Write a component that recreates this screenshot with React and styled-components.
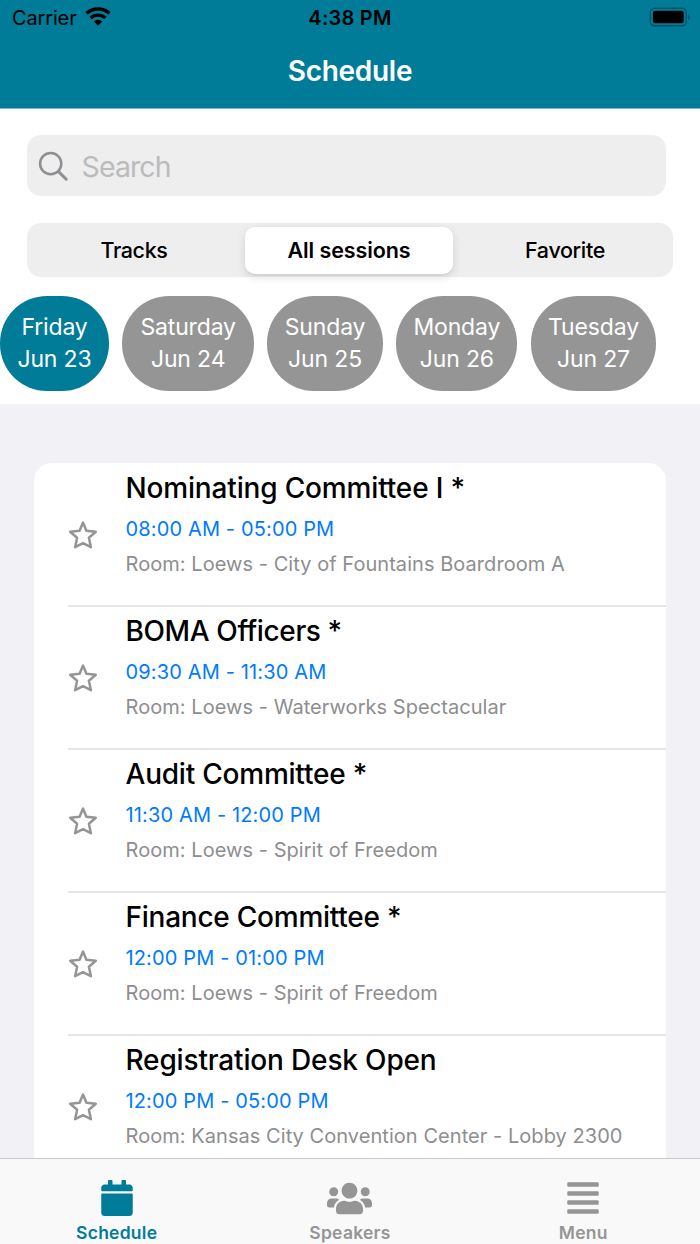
import React from 'react'
import styled, { createGlobalStyle } from 'styled-components'
import { FaCalendar, FaUsers, FaAlignJustify } from 'react-icons/fa'

const GlobalStyle = createGlobalStyle`
* {
  box-sizing: border-box;
}
body {
  margin: 0;
  font-family: Inter, "Liberation Sans", sans-serif;
  background-color: #f2f1f6;
}
`

const Screen = styled.div`
display: flex;
flex-direction: column;
width: 700px;
height: 1244px;
overflow: hidden;
background-color: #f2f1f6;
`

const Header = styled.header`
flex: none;
height: 109px;
background-color: #007c99;
border-bottom: 1px solid #7fb5c4;
`

const StatusBar = styled.div`
display: grid;
grid-template-columns: 1fr auto 1fr;
align-items: center;
height: 36px;
padding: 0 9px;
color: #000;
font-size: 20px;
line-height: 36px;
`

const Carrier = styled.div`
display: flex;
align-items: center;
gap: 8px;
padding-left: 3px;
letter-spacing: -0.15px;
`

const Wifi = styled.svg`
margin-bottom: 3px;
`

const Clock = styled.div`
font-weight: 600;
letter-spacing: 0.25px;
`

const Battery = styled.svg`
justify-self: end;
margin-bottom: 2px;
`

const HeaderTitle = styled.h1`
margin: 0;
color: white;
font-size: 28px;
font-weight: 600;
line-height: 70px;
text-align: center;
letter-spacing: -0.3px;
`

const Filters = styled.section`
flex: none;
height: 295px;
padding-top: 26px;
background-color: white;
`

const SearchBox = styled.div`
display: flex;
align-items: center;
gap: 12.5px;
width: 639px;
height: 61px;
margin-left: 27px;
padding: 2px 0 0 11px;
border-radius: 14px;
background-color: #eeeeee;
color: #bbbbbd;
font-size: 28.5px;
letter-spacing: -0.9px;
`

const Segments = styled.div`
display: grid;
grid-template-columns: 214px 208px 1fr;
gap: 4px;
width: 646px;
height: 54px;
margin: 27px 0 0 27px;
padding: 4px 0 3px;
border-radius: 14px;
background-color: #eeeeee;
`

const Segment = styled.div`
display: flex;
align-items: center;
justify-content: center;
padding-bottom: 1px;
border-radius: 10px;
color: #000;
font-size: 21.5px;
font-weight: ${props => props.$active ? 600 : 500};
letter-spacing: ${props => props.$active ? '-0.1px' : '-0.35px'};
background-color: ${props => props.$active ? 'white' : 'transparent'};
box-shadow: ${props => props.$active ? '0 3px 10px rgba(0, 0, 0, 0.12), 0 2px 1px rgba(0, 0, 0, 0.03)' : 'none'};
`

const Days = styled.div`
display: flex;
gap: 13.4px;
margin-top: 19px;
`

const Day = styled.div`
flex: none;
width: ${props => props.$width}px;
height: 95px;
padding-top: 15px;
border-radius: 47px;
background-color: ${props => props.$active ? '#007c99' : '#959595'};
color: white;
font-size: 23px;
line-height: 32px;
text-align: center;
letter-spacing: -0.15px;
`

const List = styled.main`
flex: 1;
min-height: 0;
overflow: hidden;
padding: 59px 34px 0;
`

const Card = styled.div`
height: 800px;
padding-top: 1px;
border-radius: 18px;
background-color: white;
`

const Session = styled.div`
display: flex;
height: 143px;
margin-left: 34px;
border-bottom: 2px solid #e6e6e7;
`

const Star = styled.svg`
flex: none;
margin: 56px 27.5px 0 0;
`

const SessionTitle = styled.div`
font-size: 28px;
font-weight: 500;
line-height: 34px;
padding-top: 7px;
white-space: nowrap;
letter-spacing: ${props => props.$spacing}px;
`

const Time = styled.div`
margin-top: 10px;
color: #007aff;
font-size: 20px;
line-height: 28px;
letter-spacing: 0.14px;
`

const Room = styled.div`
margin-top: 7px;
color: #8e8e90;
font-size: 20px;
line-height: 28px;
white-space: nowrap;
letter-spacing: 0.05px;
`

const TabBar = styled.nav`
flex: none;
display: grid;
grid-template-columns: repeat(3, 1fr);
height: 86px;
border-top: 1px solid #c8c8c8;
background-color: #f9f9f9;
`

const Tab = styled.div`
display: flex;
flex-direction: column;
align-items: center;
color: ${props => props.$active ? '#007c99' : '#959595'};
font-size: 17.5px;
font-weight: 600;
line-height: 24px;
letter-spacing: 0.25px;
`

const TabIcon = styled.div`
display: flex;
align-items: center;
height: 36px;
margin: 21px 0 5px;
`

const days = [
  { name: 'Friday', date: 'Jun 23', width: 109, active: true },
  { name: 'Saturday', date: 'Jun 24', width: 131.5 },
  { name: 'Sunday', date: 'Jun 25', width: 115.5 },
  { name: 'Monday', date: 'Jun 26', width: 121.3 },
  { name: 'Tuesday', date: 'Jun 27', width: 125.3 },
]

const sessions = [
  { title: 'Nominating Committee I *', spacing: -0.16, time: '08:00 AM - 05:00 PM', room: 'Loews - City of Fountains Boardroom A' },
  { title: 'BOMA Officers *', spacing: -0.38, time: '09:30 AM - 11:30 AM', room: 'Loews - Waterworks Spectacular' },
  { title: 'Audit Committee *', spacing: -0.22, time: '11:30 AM - 12:00 PM', room: 'Loews - Spirit of Freedom' },
  { title: 'Finance Committee *', spacing: -0.24, time: '12:00 PM - 01:00 PM', room: 'Loews - Spirit of Freedom' },
  { title: 'Registration Desk Open', spacing: -0.16, time: '12:00 PM - 05:00 PM', room: 'Kansas City Convention Center - Lobby 2300' },
]

function App() {
  return (
    <Screen>
      <GlobalStyle />
      <Header>
        <StatusBar>
          <Carrier>
            Carrier
            <Wifi width="26" height="19" viewBox="0 0 26 19">
              <path d="M1.5 6.4A16.9 16.9 0 0 1 24.5 6.4" fill="none" stroke="#000" strokeWidth="3.5" />
              <path d="M5.7 11A10.7 10.7 0 0 1 20.3 11" fill="none" stroke="#000" strokeWidth="3.4" />
              <path d="M8.8 14.4A6.1 6.1 0 0 1 17.2 14.4L13 18.8Z" fill="#000" />
            </Wifi>
          </Carrier>
          <Clock>4:38 PM</Clock>
          <Battery width="42" height="20" viewBox="0 0 42 20">
            <rect x="1.2" y="1.2" width="36" height="17.6" rx="4.5" fill="none" stroke="#005266" strokeWidth="1.4" />
            <rect x="3.9" y="3.8" width="30.8" height="12.4" rx="2.2" fill="#000" />
            <path d="M39 7Q41 8 41 10T39 13Z" fill="#005266" />
          </Battery>
        </StatusBar>
        <HeaderTitle>Schedule</HeaderTitle>
      </Header>
      <Filters>
        <SearchBox>
          <svg width="31" height="31" viewBox="0 0 31 31" fill="none" stroke="#8e8e93" strokeLinecap="round">
            <circle cx="12.7" cy="12.7" r="10.6" strokeWidth="2.5" />
            <path d="M20.6 20.6L28.2 28.2" strokeWidth="3" />
          </svg>
          Search
        </SearchBox>
        <Segments>
          <Segment>Tracks</Segment>
          <Segment $active>All sessions</Segment>
          <Segment>Favorite</Segment>
        </Segments>
        <Days>
          {days.map(day => (
            <Day key={day.name} $width={day.width} $active={day.active}>
              <div>{day.name}</div>
              <div>{day.date}</div>
            </Day>
          ))}
        </Days>
      </Filters>
      <List>
        <Card>
          {sessions.map(session => (
            <Session key={session.title}>
              <Star width="30" height="30" viewBox="0 0 30 30">
                <path
                  d="M15 2.6L18.4 10.8L27.8 11.7L20.9 17.8L22.9 27.2L15 23.2L7.1 27.2L9.1 17.8L2.2 11.7L11.6 10.8Z"
                  fill="none"
                  stroke="#959595"
                  strokeWidth="2.5"
                  strokeLinejoin="round"
                />
              </Star>
              <div>
                <SessionTitle $spacing={session.spacing}>{session.title}</SessionTitle>
                <Time>{session.time}</Time>
                <Room>Room: {session.room}</Room>
              </div>
            </Session>
          ))}
        </Card>
      </List>
      <TabBar>
        <Tab $active>
          <TabIcon><FaCalendar size={36} /></TabIcon>
          Schedule
        </Tab>
        <Tab>
          <TabIcon><FaUsers size={45} /></TabIcon>
          Speakers
        </Tab>
        <Tab>
          <TabIcon><FaAlignJustify size={36} /></TabIcon>
          Menu
        </Tab>
      </TabBar>
    </Screen>
  )
}

export default App
